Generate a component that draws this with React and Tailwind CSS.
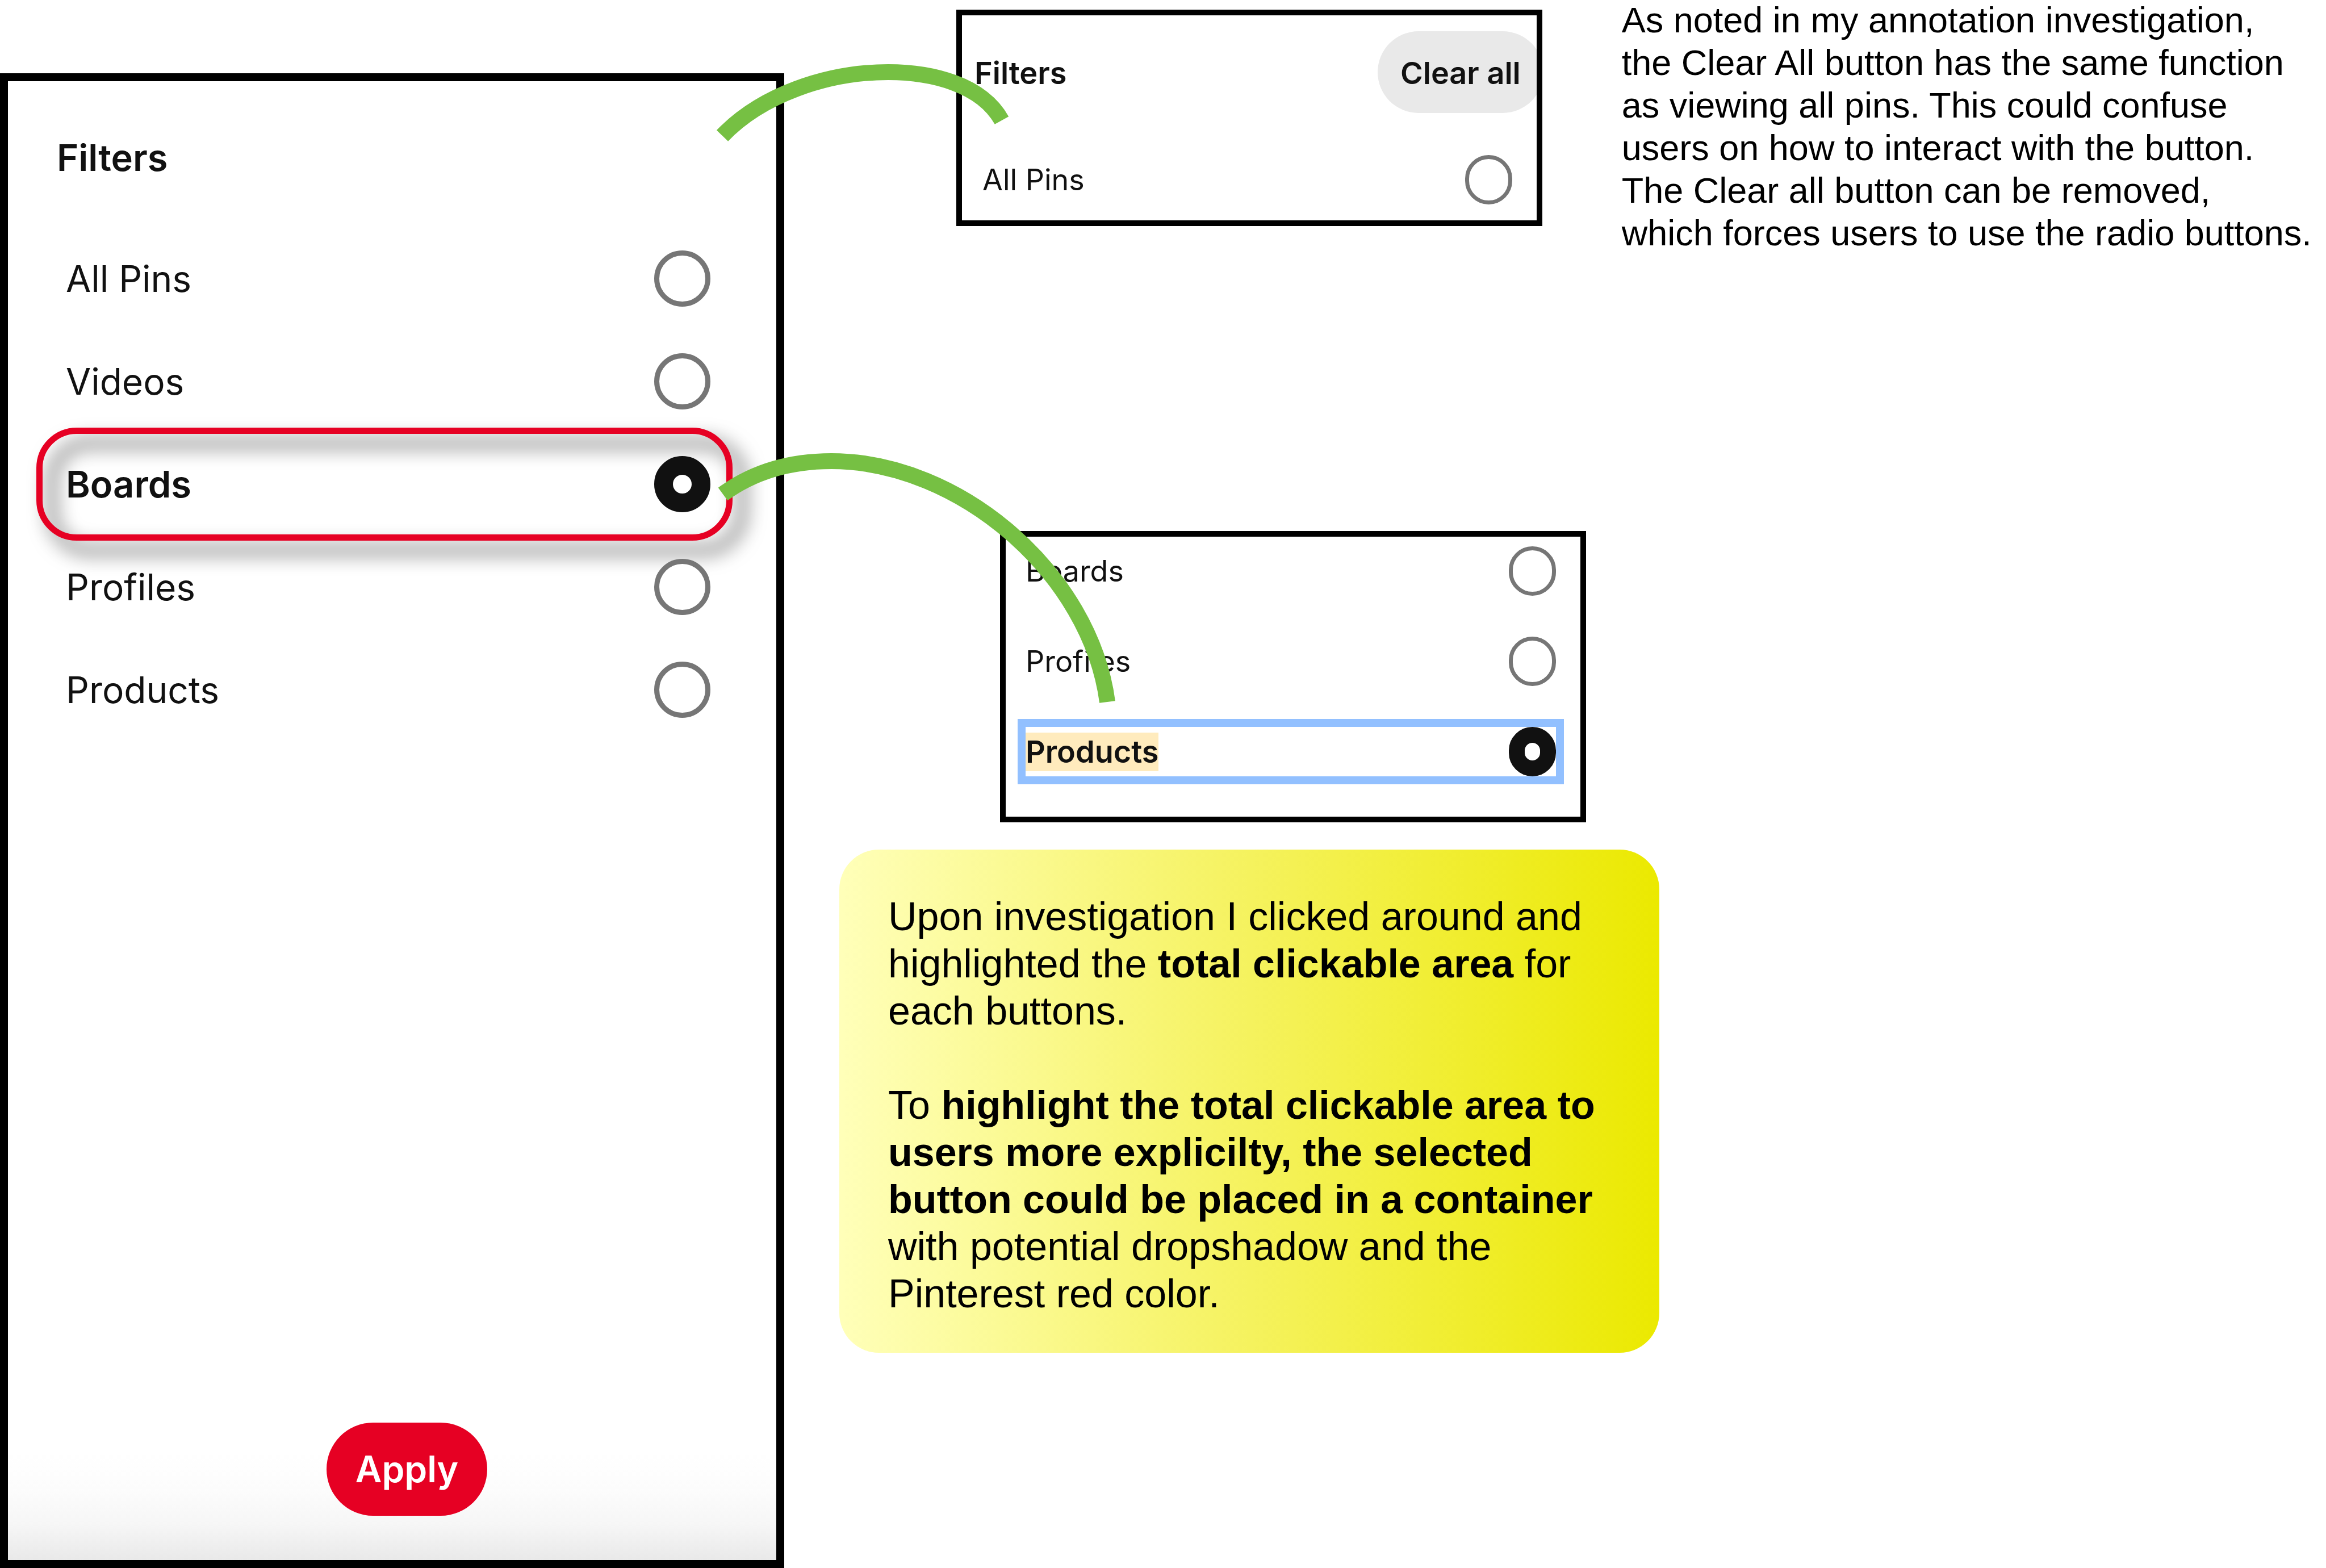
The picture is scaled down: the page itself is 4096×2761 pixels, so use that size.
import React, { useState } from "react";

function Option({ name, label, selected, onSelect, large, marked }) {
  const size = large
    ? selected
      ? "text-[65px] leading-[80px] font-semibold "
      : "text-[64px] leading-[80px] "
    : selected
      ? "text-[54px] leading-[68px] font-semibold "
      : "text-[52px] leading-[68px] ";
  return (
    <label
      className={
        large
          ? "relative flex h-[181px] items-center justify-between pl-[102px] pr-[116px]"
          : "relative flex h-[87px] items-center justify-between " +
            (marked ? "outline-[14px] outline-solid outline-[#92c0ff]" : "")
      }
    >
      <span className={size + (marked ? "bg-[#ffebbd]" : "")}>{label}</span>
      <input
        type="radio"
        name={name}
        checked={selected}
        onChange={onSelect}
        className={
          "m-0 shrink-0 appearance-none rounded-full bg-white " +
          (large ? "size-[99px] " : "h-[87px] w-[83px] ") +
          (selected
            ? large
              ? "border-[33px] border-[#111111]"
              : "border-[28px] border-[#111111]"
            : large
              ? "border-[9px] border-[#767676]"
              : "border-[7px] border-[#767676]")
        }
      />
      {large && selected && (
        <span className="pointer-events-none absolute -inset-y-[9px] left-[50px] right-[77px] rounded-[71px] border-[11px] border-[#e60023] drop-shadow-[22px_22px_17px_rgba(0,0,0,0.75)]" />
      )}
    </label>
  );
}

function FilterPanel() {
  const [value, setValue] = useState("Boards");
  return (
    <section className="mt-[129px] flex flex-col border-[14px] border-black bg-[linear-gradient(to_top,#e9e9e9_0px,#f6f6f6_62px,#fcfcfc_120px,#ffffff_190px)] font-['Inter',sans-serif] text-[#111111]">
      <h2 className="mt-[95px] pl-[86px] text-[65px] font-semibold leading-[80px]">Filters</h2>
      <div role="radiogroup" aria-label="Filters" className="mt-[82px] flex flex-col">
        {["All Pins", "Videos", "Boards", "Profiles", "Products"].map((item) => (
          <Option
            key={item}
            large
            name="filter"
            label={item}
            selected={value === item}
            onSelect={() => setValue(item)}
          />
        ))}
      </div>
      <div className="mb-[78px] mt-auto flex justify-center pl-[52px]">
        <button
          type="button"
          className="h-[164px] rounded-full bg-[#e60023] px-[51px] text-[64px] font-semibold leading-[80px] text-white"
        >
          Apply
        </button>
      </div>
    </section>
  );
}

function ClearAllCard() {
  const [checked, setChecked] = useState(false);
  return (
    <section className="relative ml-[303px] mt-[17px] w-[38%] shrink-0 font-['Inter',sans-serif] text-[#111111]">
      <div className="overflow-hidden border-[10px] border-black bg-white pb-[28px] pt-[28px]">
        <div className="flex items-center justify-between pl-[22px]">
          <h3 className="pt-1 text-[54px] font-semibold leading-[68px]">Filters</h3>
          <button
            type="button"
            onClick={() => setChecked(false)}
            className="-mr-[12px] h-[144px] rounded-full bg-[#e9e9e9] px-[40px] pt-1 text-[54px] font-semibold leading-[68px]"
          >
            Clear all
          </button>
        </div>
        <div className="mt-[74px] pl-[36px] pr-[43px]">
          <Option
            name="clear-filter"
            label="All Pins"
            selected={checked}
            onSelect={() => setChecked(true)}
          />
        </div>
      </div>
      <svg
        aria-hidden="true"
        viewBox="1244 77 560 200"
        className="pointer-events-none absolute -left-[440px] top-[60px] h-[200px] w-[560px]"
      >
        <path
          d="M1272 239C1340 168 1455 127 1564 127C1640 127 1728 148 1764 212"
          fill="none"
          stroke="#76c043"
          strokeWidth="28"
        />
      </svg>
    </section>
  );
}

function ClickAreaCard() {
  const [value, setValue] = useState("Products");
  return (
    <section className="relative ml-[380px] mt-[487px] w-[38%] font-['Inter',sans-serif] text-[#111111]">
      <div className="flex flex-col gap-[72px] border-[10px] border-black bg-white pb-[71px] pl-[35px] pr-[43px] pt-[17px]">
        {["Boards", "Profiles", "Products"].map((item) => (
          <Option
            key={item}
            name="area-filter"
            label={item}
            selected={value === item}
            marked={value === item}
            onSelect={() => setValue(item)}
          />
        ))}
      </div>
      <svg
        aria-hidden="true"
        viewBox="1241 775 740 480"
        className="pointer-events-none absolute -left-[520px] -top-[160px] h-[480px] w-[740px]"
      >
        <path
          d="M1273 870C1325 832 1390 812 1464 812C1690 812 1920 1010 1950 1236"
          fill="none"
          stroke="#76c043"
          strokeWidth="28"
        />
      </svg>
    </section>
  );
}

export default function App() {
  return (
    <main className="grid min-h-screen grid-cols-[1381fr_2715fr] overflow-hidden bg-white text-black">
      <FilterPanel />
      <div className="flex min-w-0 flex-col font-['Liberation_Sans',Arial,sans-serif]">
        <div className="flex items-start">
          <ClearAllCard />
          <p className="-mt-[2px] ml-[140px] whitespace-nowrap text-[63px] leading-[75px]">
            As noted in my annotation investigation,
            <br />
            the Clear All button has the same function
            <br />
            as viewing all pins. This could confuse
            <br />
            users on how to interact with the button.
            <br />
            The Clear all button can be removed,
            <br />
            which forces users to use the radio buttons.
          </p>
        </div>
        <ClickAreaCard />
        <div className="ml-[97px] mt-[48px] w-[53.2%] whitespace-nowrap rounded-[70px] bg-[linear-gradient(to_right,#ffffb9,#f5f25e_50%,#f0ed2c_77%,#ebe900)] pb-[62px] pl-[86px] pt-[77px] text-[70px] leading-[83px]">
          <p>
            Upon investigation I clicked around and
            <br />
            highlighted the <strong>total clickable area</strong> for
            <br />
            each buttons.
          </p>
          <p className="mt-[83px]">
            To <strong>highlight the total clickable area to</strong>
            <br />
            <strong>users more explicilty, the selected</strong>
            <br />
            <strong>button could be placed in a container</strong>
            <br />
            with potential dropshadow and the
            <br />
            Pinterest red color.
          </p>
        </div>
      </div>
    </main>
  );
}
